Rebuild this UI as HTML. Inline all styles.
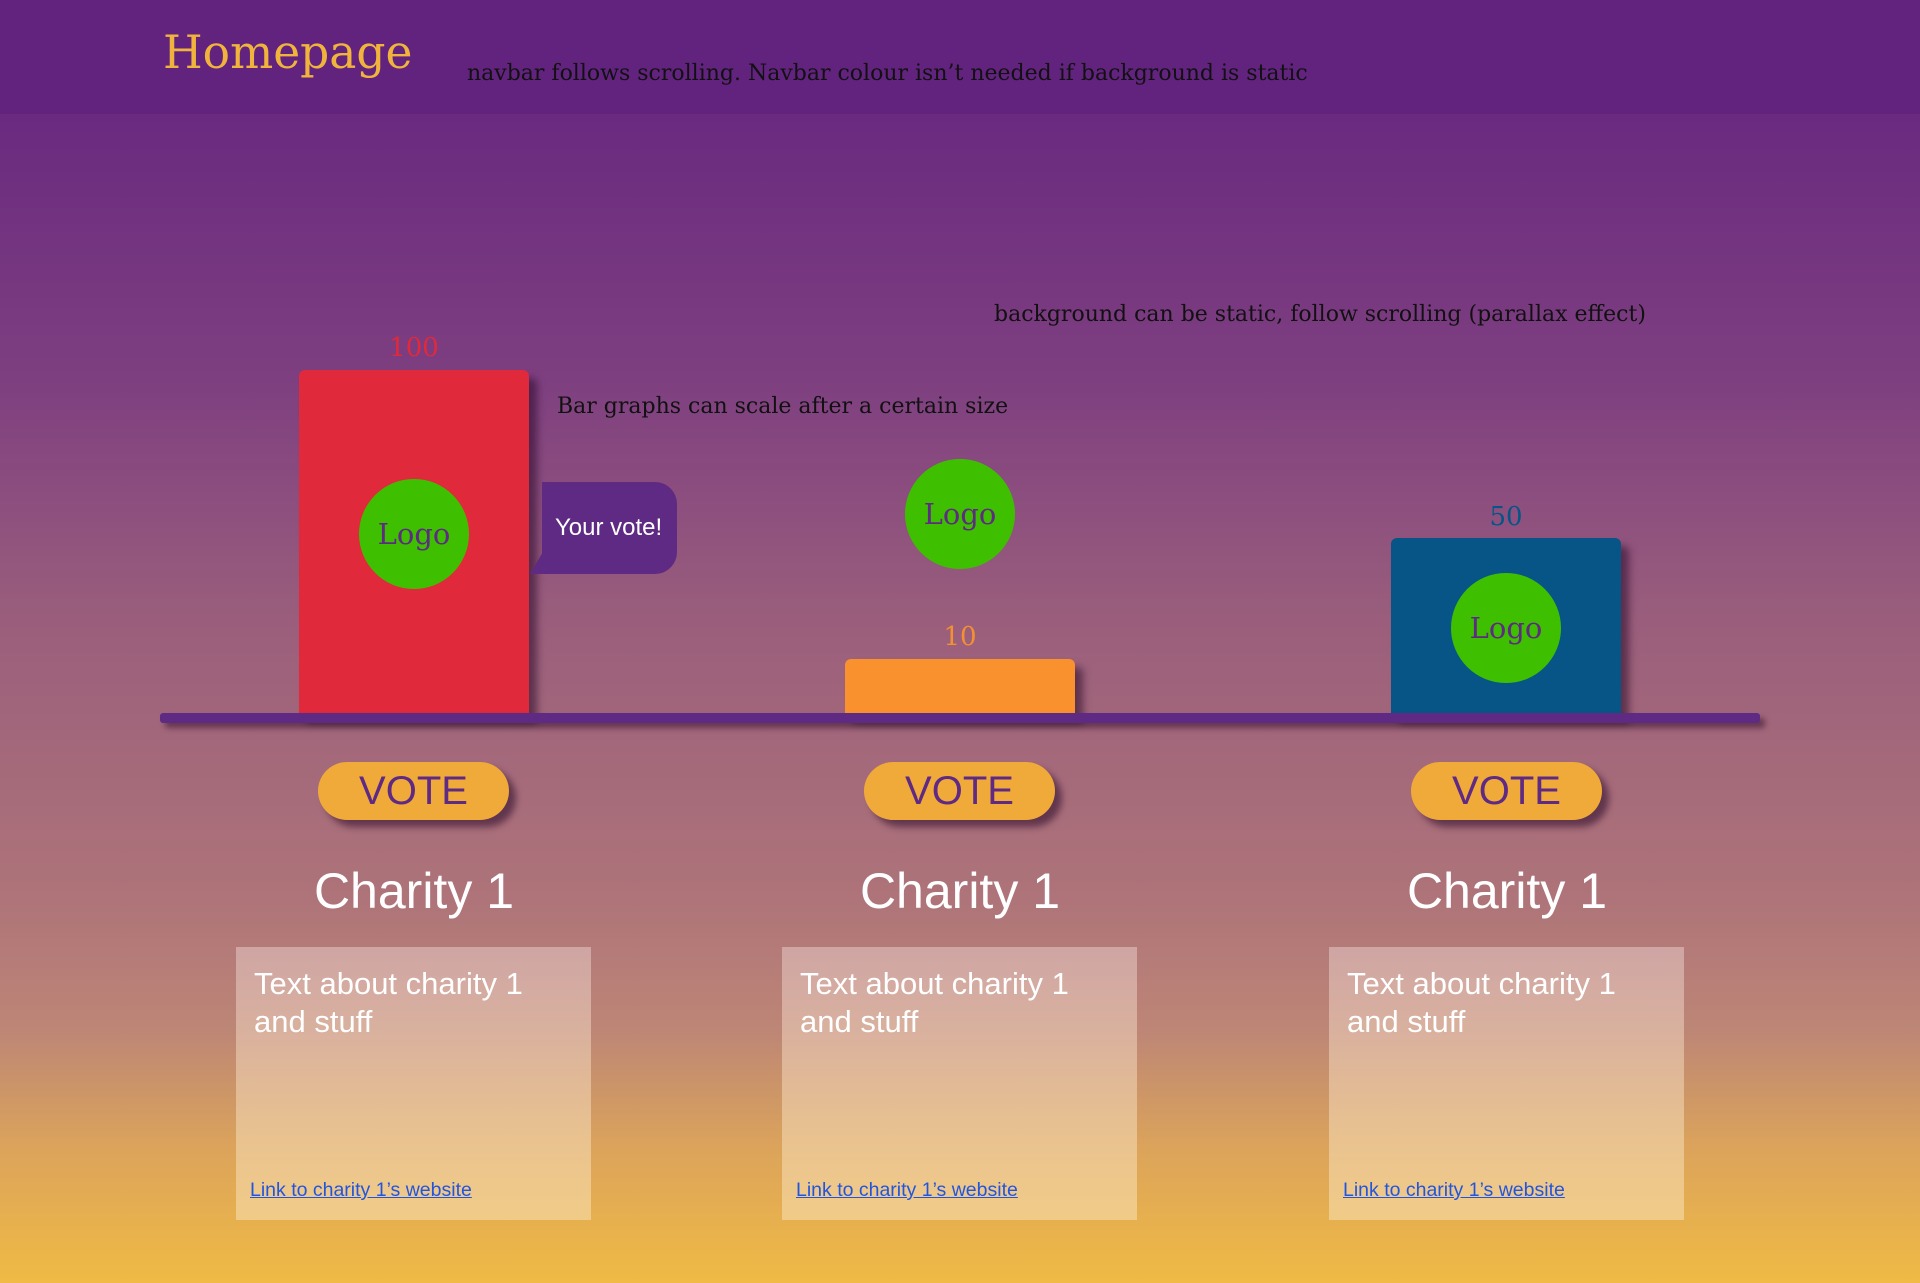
<!DOCTYPE html>
<html><head><meta charset="utf-8"><style>
*{margin:0;padding:0;box-sizing:border-box}
body{width:1920px;height:1283px;overflow:hidden;position:relative;font-family:"Liberation Sans",sans-serif;
background:linear-gradient(to bottom,#62237f 0px,#6a2a80 114px,#7e3f80 380px,#9a5e7c 620px,#ae7479 900px,#bd8676 1030px,#dca45a 1150px,#f0ba45 1283px);}
.nav{position:absolute;left:0;top:0;width:1920px;height:114px;background:#62237f}
.abs{position:absolute}
.serif{font-family:"DejaVu Serif","Liberation Serif",serif}
.bar{position:absolute;box-shadow:8px 8px 8px rgba(40,10,40,.55);border-radius:6px 6px 0 0}
.logo{position:absolute;width:110px;height:110px;border-radius:50%;background:#3ec000;color:#5e2a83;font-family:"DejaVu Serif",serif;font-size:29px;display:flex;align-items:center;justify-content:center}
.num{position:absolute;width:230px;text-align:center;font-family:"DejaVu Serif",serif;font-size:26px}
.vote{position:absolute;width:191px;height:58px;top:762px;border-radius:29px;background:#f0aa3a;color:#5e2a83;font-size:40px;text-align:center;line-height:58px;box-shadow:7px 7px 7px rgba(40,10,40,.55)}
.ch{position:absolute;top:862px;width:356px;text-align:center;color:#fff;font-size:50px}
.card{position:absolute;top:947px;width:355px;height:273px;background:linear-gradient(to bottom,rgba(230,200,200,.55),rgba(245,215,160,.7));color:#fff;font-size:31px;padding:18px 18px;line-height:38px}
.card a{position:absolute;left:14px;top:232px;font-size:19.5px;color:#2255dd;text-decoration:underline;line-height:22px}
</style></head><body>
<div class="nav"></div>
<div class="abs serif" style="left:163px;top:26px;font-size:45.5px;color:#f0b43c">Homepage</div>
<div class="abs serif" style="left:467px;top:61px;font-size:22px;color:#111">navbar follows scrolling. Navbar colour isn’t needed if background is static</div>
<div class="abs serif" style="left:994px;top:302px;font-size:22px;color:#111">background can be static, follow scrolling (parallax effect)</div>
<div class="abs serif" style="left:557px;top:394px;font-size:22px;color:#111">Bar graphs can scale after a certain size</div>

<div class="num" style="left:299px;top:333px;color:#e0293a">100</div>
<div class="bar" style="left:299px;top:370px;width:230px;height:345px;background:#e0293a"></div>
<div class="logo" style="left:359px;top:479px">Logo</div>
<div class="abs" style="left:542px;top:482px;width:135px;height:92px;background:#5e2a83;border-radius:0 22px 22px 0;color:#fff;font-size:24px;line-height:92px;padding-left:13px">Your vote!</div>
<div class="abs" style="left:530px;top:550px;width:0;height:0;border-top:24px solid transparent;border-right:14px solid #5e2a83"></div>

<div class="logo" style="left:905px;top:459px">Logo</div>
<div class="num" style="left:845px;top:622px;color:#f39030">10</div>
<div class="bar" style="left:845px;top:659px;width:230px;height:56px;background:#f9922e"></div>

<div class="num" style="left:1391px;top:502px;color:#075587">50</div>
<div class="bar" style="left:1391px;top:538px;width:230px;height:177px;background:#075587"></div>
<div class="logo" style="left:1451px;top:573px">Logo</div>

<div class="abs" style="left:160px;top:713px;width:1600px;height:10px;background:#5e2a83;border-radius:3px;box-shadow:5px 5px 6px rgba(40,10,40,.5)"></div>

<div class="vote" style="left:318px">VOTE</div>
<div class="vote" style="left:864px">VOTE</div>
<div class="vote" style="left:1411px">VOTE</div>

<div class="ch" style="left:236px">Charity 1</div>
<div class="ch" style="left:782px">Charity 1</div>
<div class="ch" style="left:1329px">Charity 1</div>

<div class="card" style="left:236px">Text about charity 1 and stuff<a>Link to charity 1’s website</a></div>
<div class="card" style="left:782px">Text about charity 1 and stuff<a>Link to charity 1’s website</a></div>
<div class="card" style="left:1329px">Text about charity 1 and stuff<a>Link to charity 1’s website</a></div>
</body></html>
